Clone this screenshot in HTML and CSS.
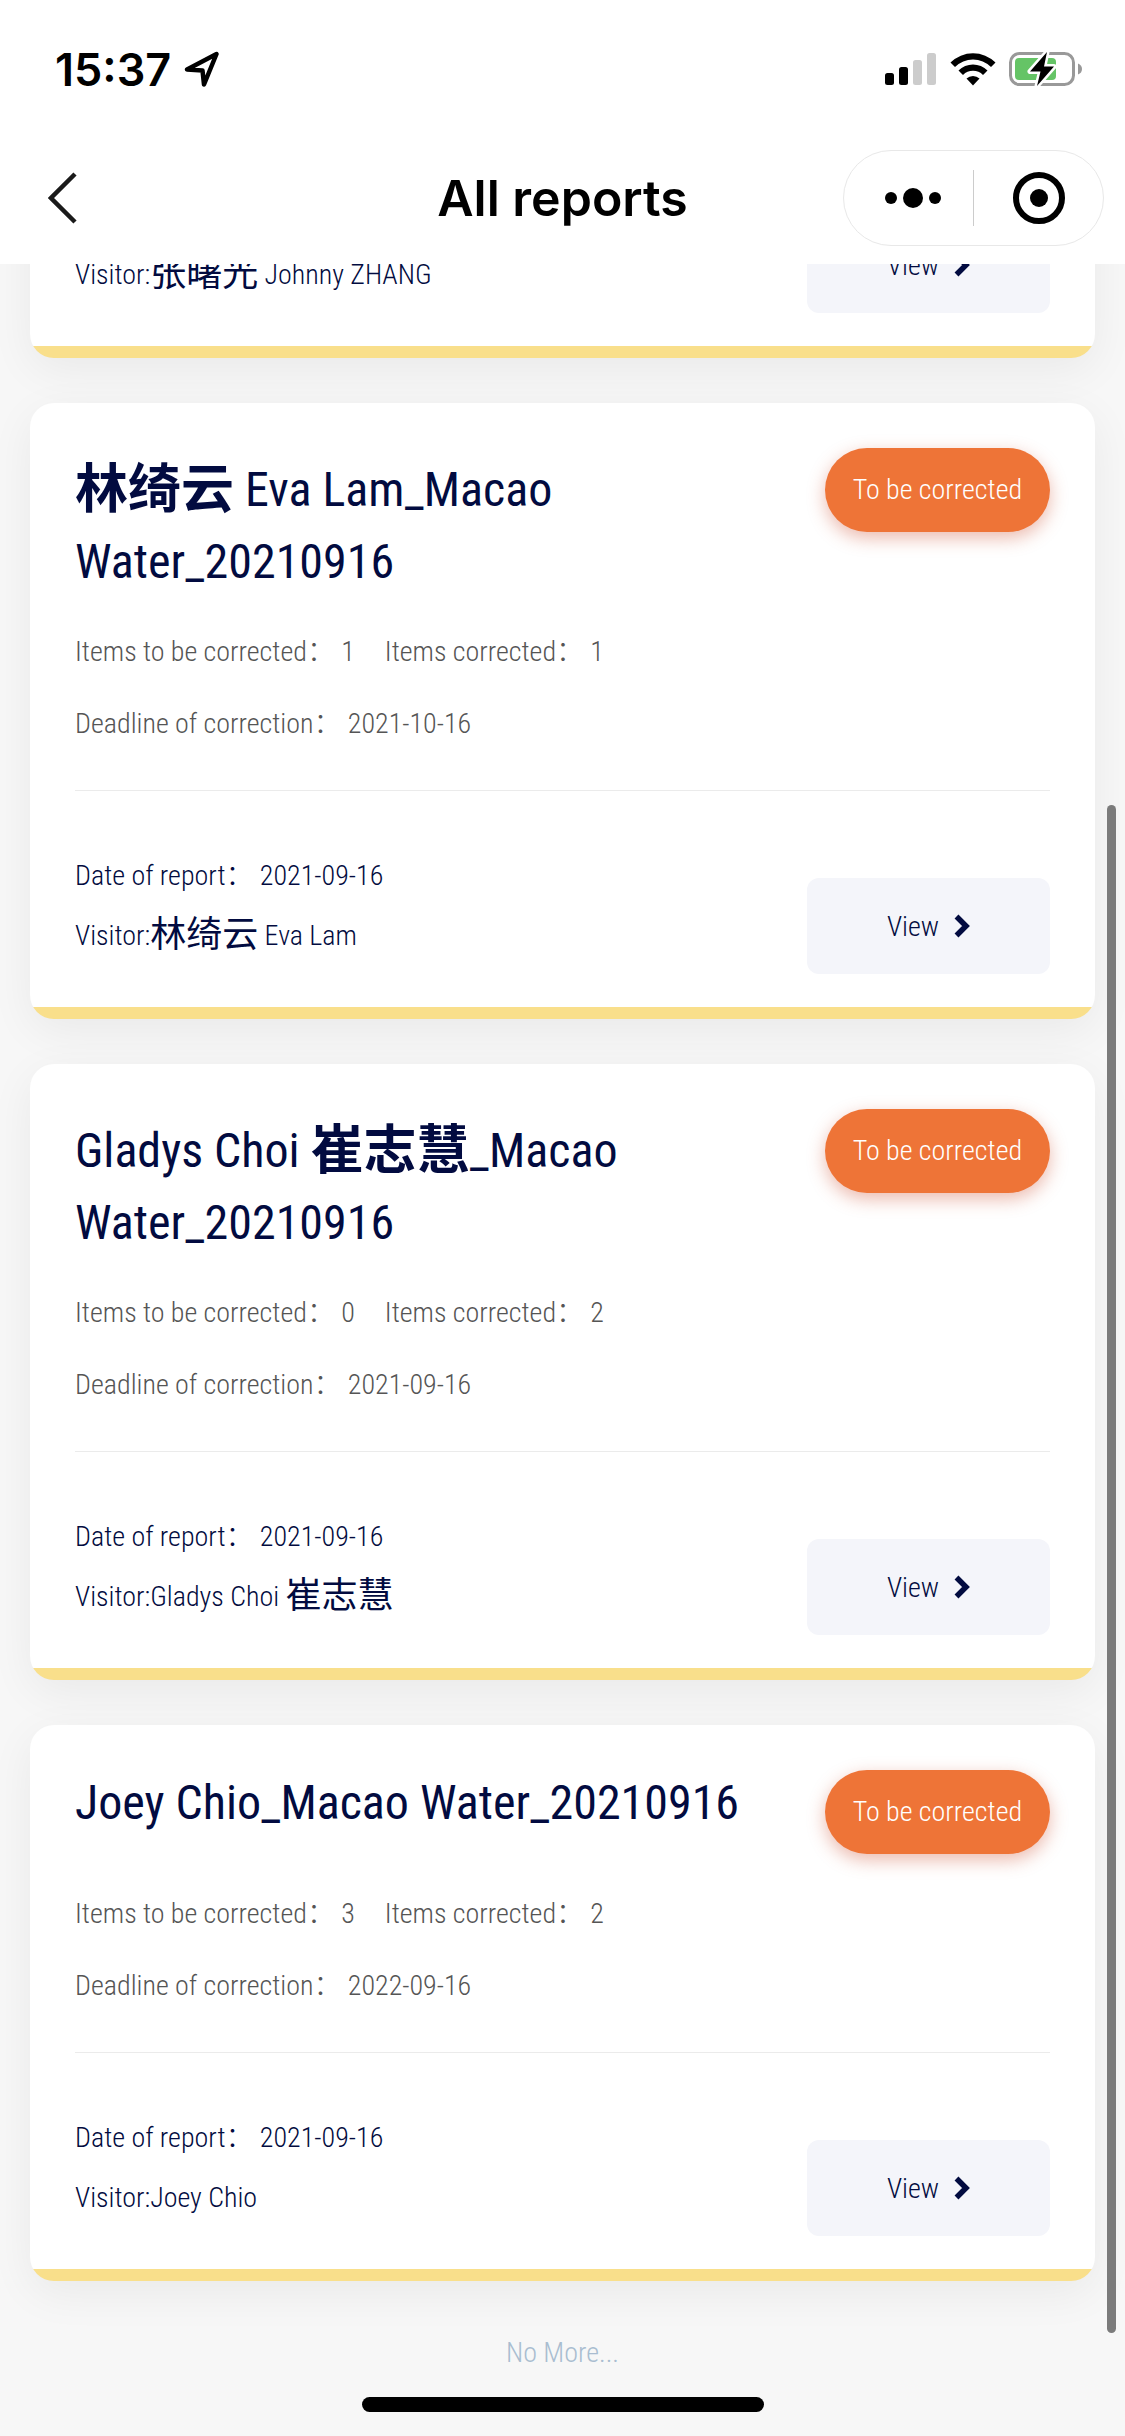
FILE: index.html
```html
<!DOCTYPE html>
<html lang="en">
<head>
    <meta charset="UTF-8">
    <meta name="viewport" content="width=device-width, initial-scale=1.0">
    <title>All reports</title>
    <link rel="stylesheet" href="styles.css">
</head>
<body>
    <header class="top">
        <div class="status-bar">
            <div class="status-left">
                <span class="time">15:37</span>
                <svg class="location" width="36" height="36" viewBox="0 0 36 36">
                    <path d="M3 18.500L32.500 3L20 33.500L18.500 19.500Z" fill="none" stroke="#000" stroke-width="4.500" stroke-linejoin="round"/>
                </svg>
            </div>
            <div class="status-right">
                <svg width="52" height="34" viewBox="0 0 52 34">
                    <rect x="0" y="21" width="9" height="12" rx="2.500"/>
                    <rect x="14" y="15" width="9" height="18" rx="2.500"/>
                    <rect x="28" y="8" width="9" height="25" rx="2.500" fill="#ccc"/>
                    <rect x="42" y="1" width="9" height="32" rx="2.500" fill="#ccc"/>
                </svg>
                <svg width="46" height="34" viewBox="0 0 46 34">
                    <path d="M0.500 10.500A32 32 0 0 1 45.500 10.500L41 15A25.500 25.500 0 0 0 5 15Z"/>
                    <path d="M8.500 18.500A20.500 20.500 0 0 1 37.500 18.500L33 23A14 14 0 0 0 13 23Z"/>
                    <path d="M16.500 26.500A9.500 9.500 0 0 1 29.500 26.500L23 33.500Z"/>
                </svg>
                <svg width="74" height="36" viewBox="0 0 74 36">
                    <rect x="1.500" y="2.500" width="63" height="31" rx="9" fill="none" stroke="#999" stroke-width="3"/>
                    <path d="M69 12.500Q73 14 73 18T69 23.500Z" fill="#999"/>
                    <rect x="6" y="7" width="41" height="22" rx="4" fill="#65c466"/>
                    <path d="M38 1L21 20.500H31.500L28 35L45 15.500H35Z" fill="#000" stroke="#fff" stroke-width="5" stroke-linejoin="round" paint-order="stroke"/>
                </svg>
            </div>
        </div>
        <nav class="nav-bar">
            <button class="back" type="button" aria-label="Back">
                <svg width="30" height="52" viewBox="0 0 30 52">
                    <path d="M27 2L3 26L27 50" fill="none" stroke="#1a1a1a" stroke-width="4.500"/>
                </svg>
            </button>
            <h1 class="page-title">All reports</h1>
            <div class="capsule">
                <button type="button" aria-label="More">
                    <svg width="66" height="22" viewBox="-8 0 66 22">
                        <circle cx="7" cy="11" r="6"/>
                        <circle cx="29" cy="11" r="10"/>
                        <circle cx="51" cy="11" r="6"/>
                    </svg>
                </button>
                <button type="button" aria-label="Close">
                    <svg width="54" height="54" viewBox="0 0 54 54">
                        <circle cx="27" cy="27" r="23" fill="none" stroke="#000" stroke-width="6"/>
                        <circle cx="27" cy="27" r="9"/>
                    </svg>
                </button>
            </div>
        </nav>
    </header>

    <main class="list">
        <section class="card">
            <div class="card-bottom">
                <div class="report-info">
                    <p>Visitor:<span class="cn">张曙光</span> Johnny ZHANG</p>
                </div>
                <button class="view" type="button">View
                    <svg width="16" height="24" viewBox="0 0 16 24"><path d="M2.500 2.500L12 12L2.500 21.500" fill="none" stroke="#020b40" stroke-width="5.500"/></svg>
                </button>
            </div>
        </section>

        <section class="card">
            <div class="card-head">
                <h2><span class="cn">林绮云</span> Eva Lam_Macao Water_20210916</h2>
                <span class="status">To be corrected</span>
            </div>
            <div class="details">
                <p><span class="item">Items to be corrected： 1</span><span class="item">Items corrected： 1</span></p>
                <p>Deadline of correction： 2021-10-16</p>
            </div>
            <div class="card-bottom">
                <div class="report-info">
                    <p>Date of report： 2021-09-16</p>
                    <p>Visitor:<span class="cn">林绮云</span> Eva Lam</p>
                </div>
                <button class="view" type="button">View
                    <svg width="16" height="24" viewBox="0 0 16 24"><path d="M2.500 2.500L12 12L2.500 21.500" fill="none" stroke="#020b40" stroke-width="5.500"/></svg>
                </button>
            </div>
        </section>

        <section class="card">
            <div class="card-head">
                <h2>Gladys Choi <span class="cn">崔志慧</span>_Macao Water_20210916</h2>
                <span class="status">To be corrected</span>
            </div>
            <div class="details">
                <p><span class="item">Items to be corrected： 0</span><span class="item">Items corrected： 2</span></p>
                <p>Deadline of correction： 2021-09-16</p>
            </div>
            <div class="card-bottom">
                <div class="report-info">
                    <p>Date of report： 2021-09-16</p>
                    <p>Visitor:Gladys Choi <span class="cn">崔志慧</span></p>
                </div>
                <button class="view" type="button">View
                    <svg width="16" height="24" viewBox="0 0 16 24"><path d="M2.500 2.500L12 12L2.500 21.500" fill="none" stroke="#020b40" stroke-width="5.500"/></svg>
                </button>
            </div>
        </section>

        <section class="card">
            <div class="card-head">
                <h2 class="one-line">Joey Chio_Macao Water_20210916</h2>
                <span class="status">To be corrected</span>
            </div>
            <div class="details">
                <p><span class="item">Items to be corrected： 3</span><span class="item">Items corrected： 2</span></p>
                <p>Deadline of correction： 2022-09-16</p>
            </div>
            <div class="card-bottom">
                <div class="report-info">
                    <p>Date of report： 2021-09-16</p>
                    <p>Visitor:Joey Chio</p>
                </div>
                <button class="view" type="button">View
                    <svg width="16" height="24" viewBox="0 0 16 24"><path d="M2.500 2.500L12 12L2.500 21.500" fill="none" stroke="#020b40" stroke-width="5.500"/></svg>
                </button>
            </div>
        </section>

        <p class="no-more">No More...</p>
    </main>

    <div class="scrollbar"></div>
    <div class="home-bar"></div>
</body>
</html>
```
FILE: styles.css
```css
* {
    box-sizing: border-box;
    margin: 0;
    padding: 0;
}

body {
    height: 100vh;
    display: flex;
    flex-direction: column;
    overflow: hidden;
    background: #f7f7f7;
    color: #020b40;
    font-family: "Roboto Condensed", Roboto, "Noto Sans CJK SC", sans-serif;
    font-size: 28px;
    font-weight: 300;
}

button {
    border: none;
    background: none;
    font: inherit;
    color: inherit;
    cursor: pointer;
}

svg {
    display: block;
}

/* status bar and title */
.top {
    flex: none;
    background: #fff;
    color: #000;
    font-family: Inter, sans-serif;
    z-index: 1;
}

.status-bar {
    height: 132px;
    padding: 6px 42px 0 55px;
    display: flex;
    justify-content: space-between;
    align-items: center;
}

.status-left,
.status-right {
    display: flex;
    align-items: center;
    gap: 13px;
}

.time {
    font-size: 45px;
    font-weight: 600;
}

.nav-bar {
    height: 132px;
    padding: 0 21px;
    display: grid;
    grid-template-columns: 1fr auto 1fr;
    align-items: center;
}

.back {
    justify-self: start;
    margin-left: 27px;
}

.page-title {
    font-size: 50px;
    font-weight: 600;
}

.capsule {
    justify-self: end;
    width: 261px;
    height: 96px;
    display: flex;
    align-items: center;
    border: 1px solid #e8e8e8;
    border-radius: 48px;
}

.capsule button {
    flex: 1;
    height: 56px;
    display: flex;
    justify-content: center;
    align-items: center;
}

.capsule button + button {
    border-left: 1px solid #ccc;
}

/* report cards */
.list {
    flex: 1;
    min-height: 0;
    padding: 0 30px;
    display: flex;
    flex-direction: column;
    justify-content: flex-end;
    gap: 45px;
    overflow: hidden;
}

.card {
    flex: none;
    padding: 45px;
    background: linear-gradient(#f9df8b, #f9df8b) bottom / 100% 12px no-repeat #fff;
    border-radius: 24px;
    box-shadow: 0 12px 45px rgba(0, 0, 0, 0.06);
}

.card-head {
    min-height: 84px;
    display: flex;
    justify-content: space-between;
    align-items: flex-start;
    gap: 45px;
}

.card-head h2 {
    padding-top: 6px;
    margin-bottom: -6px;
    font-size: 48px;
    font-weight: 400;
    line-height: 72px;
}

.card-head h2.one-line {
    line-height: 54px;
}

.cn {
    font-size: 36px;
    font-weight: 400;
    line-height: 36px;
    vertical-align: -2px;
}

.card-head .cn {
    font-size: 53px;
    font-weight: 700;
    line-height: 53px;
}

.status {
    flex: none;
    width: 225px;
    height: 84px;
    line-height: 84px;
    text-align: center;
    border-radius: 42px;
    background: #ee7437;
    color: #fff;
    box-shadow: 0 6px 18px rgba(205, 80, 50, 0.4);
}

.details {
    padding: 24px 0 30px;
    border-bottom: 1px solid #ebebeb;
    color: #555;
    line-height: 72px;
}

.item {
    margin-right: 30px;
}

.card-bottom {
    display: flex;
    justify-content: space-between;
    align-items: flex-end;
}

.details + .card-bottom {
    padding-top: 55px;
}

.report-info {
    padding-bottom: 8px;
    line-height: 60px;
}

.view {
    width: 243px;
    height: 96px;
    display: flex;
    justify-content: center;
    align-items: center;
    gap: 15px;
    border-radius: 12px;
    background: #f4f5fa;
}

.no-more {
    flex: none;
    height: 110px;
    line-height: 54px;
    text-align: center;
    color: #a9bdd0;
}

.scrollbar {
    position: fixed;
    top: 805px;
    right: 9px;
    bottom: 103px;
    width: 9px;
    border-radius: 5px;
    background: #7b7b7b;
}

.home-bar {
    position: fixed;
    left: 50%;
    bottom: 24px;
    width: 402px;
    height: 15px;
    margin-left: -201px;
    border-radius: 8px;
    background: #000;
}
```
